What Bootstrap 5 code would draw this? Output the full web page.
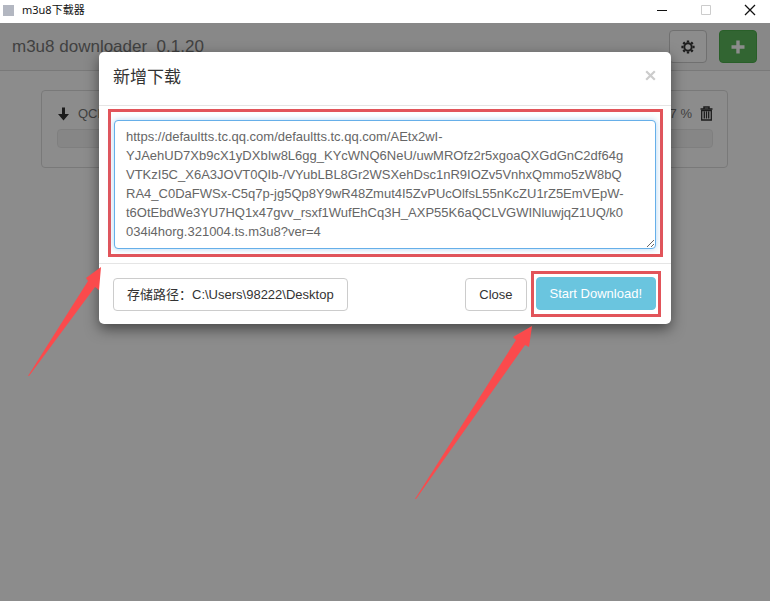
<!DOCTYPE html>
<html lang="zh-CN">
<head>
<meta charset="utf-8">
<meta name="viewport" content="width=device-width, initial-scale=1">
<title>m3u8下载器</title>
<link href="https://cdn.jsdelivr.net/npm/bootstrap@5.3.0/dist/css/bootstrap.min.css" rel="stylesheet">
<style>
  body { font-family: "Liberation Sans", "Noto Sans CJK SC", sans-serif; font-size: 13px; line-height: 19px; color: #333; }
  svg { display: block; }
  .titlebar { height: 23px; font-family: "Noto Sans", "Noto Sans CJK SC", sans-serif; font-size: 11px; line-height: 16px; color: #111; padding: 0 14px 3px 3px; }
  .app-icon { width: 11px; height: 11px; background: #b3b7c1; }
  .win-btn { border: 0; padding: 0; background: none; color: #111; }
  .win-btn:disabled { color: #ccc; }
  .app-header { height: 48px; background: #f8f8f8; border-bottom: 1px solid #dcdcdc; padding: 0 13px 0 12px; }
  .app-name { font-size: 17px; line-height: 24px; color: #777; white-space: pre; }
  .tool-btn { height: 33px; width: 38px; padding: 0; border-radius: 4px; display: flex; align-items: center; justify-content: center; }
  .btn-gear { background: #fff; border: 1px solid #ccc; color: #333; }
  .btn-plus { background: #5cb85c; border: 1px solid #4cae4c; color: #fff; }
  .tasks { padding: 19px 42px 0 41px; }
  .task { border: 1px solid #ddd; border-radius: 4px; padding: 12px 14px 19px 15px; }
  .task-line { height: 21px; color: #777; }
  .task .progress { height: 19px; margin-top: 5px; border-radius: 4px; background: #f5f5f5; border: 1px solid #e8e8e8; }
  .shade { background: rgba(0, 0, 0, .45); }
  .dialog-wrap { max-width: 572px; padding-top: 29px; }
  .dialog-box { border: 0; border-radius: 5px; box-shadow: 0 5px 14px rgba(0, 0, 0, .5); }
  .dialog-box .modal-header { height: 54px; padding: 0 15px 2px 14px; border-bottom: 1px solid #e5e5e5; }
  .dialog-box .modal-title { font-size: 17px; line-height: 24px; }
  .close-x { border: 0; background: none; padding: 0; color: #ccc; }
  .dialog-box .modal-body { padding: 3px 8px 6px 9px; }
  .mark-frame { border: 3px solid #e2545a; }
  .url-frame { padding: 8px 4px 5px 3px; }
  .url-box { height: 129px; padding: 6px 11px; font-size: 13px; line-height: 19px; color: #666; border: 1px solid #66afe9; border-radius: 4px; box-shadow: 0 0 6px rgba(102, 175, 233, .5); overflow: hidden; resize: both; }
  .dialog-box .modal-footer { padding: 7px 10px 7px 14px; border-top: 1px solid #e5e5e5; }
  .dialog-box .modal-footer > * { margin: 0; }
  .act-btn { font-size: 13px; line-height: 19px; padding: 6px 13px; border-radius: 4px; border: 1px solid #ccc; background: #fff; color: #333; }
  .act-start { background: #6ac5df; border-color: #6ac5df; color: #fff; }
  .start-frame { padding: 3px 2px 4px; }
</style>
<script src="https://cdn.jsdelivr.net/npm/bootstrap@5.3.0/dist/js/bootstrap.bundle.min.js"></script>
</head>
<body class="d-flex flex-column min-vh-100 bg-white overflow-hidden position-relative">
  <div class="titlebar d-flex align-items-center">
    <span class="app-icon me-2"></span>
    <span class="me-auto">m3u8下载器</span>
    <div class="d-flex gap-4">
      <button class="win-btn me-2" type="button" aria-label="Minimize"><svg width="12" height="12" viewBox="0 0 12 12" stroke="currentColor"><path d="M1 6.5h10"/></svg></button>
      <button class="win-btn me-1" type="button" aria-label="Maximize" disabled><svg width="12" height="12" viewBox="0 0 12 12" fill="none" stroke="currentColor"><path d="M1.500 1.500h9v9h-9z"/></svg></button>
      <button class="win-btn ms-1" type="button" aria-label="Close window"><svg width="12" height="12" viewBox="0 0 12 12" stroke="currentColor" stroke-width="1.300"><path d="M1 1l10 10M11 1L1 11"/></svg></button>
    </div>
  </div>

  <div class="flex-grow-1 position-relative">
    <header class="app-header d-flex align-items-center">
      <span class="app-name me-auto">m3u8 downloader  0.1.20</span>
      <button class="btn tool-btn btn-gear me-2" type="button" aria-label="Settings">
        <svg width="14" height="14" viewBox="0 0 14 14" fill="none" stroke="currentColor"><circle cx="7" cy="7" r="3.700" stroke-width="2"/><path stroke-width="2.400" d="M7 .4v2M7 11.600v2M.4 7h2M11.600 7h2M2.300 2.300l1.500 1.500M10.200 10.200l1.500 1.500M11.700 2.300l-1.500 1.500M3.800 10.200l-1.500 1.500"/></svg>
      </button>
      <button class="btn tool-btn btn-plus ms-1" type="button" aria-label="Add">
        <svg width="14" height="14" viewBox="0 0 14 14" stroke="currentColor" stroke-width="3.400"><path d="M7 .5v13M.5 7h13"/></svg>
      </button>
    </header>
    <main class="tasks">
      <div class="task">
        <div class="task-line d-flex align-items-center">
          <svg class="me-2" width="13" height="14" viewBox="0 0 13 14" fill="#333"><path d="M5 .5h3V7h4L6.500 13.500 1 7h4z"/></svg>
          <span class="me-auto">QCLVGW</span>
          <span class="me-2">97 %</span>
          <button class="win-btn" type="button" aria-label="Delete">
            <svg width="13" height="15" viewBox="0 0 13 15" fill="none" stroke="#333"><path stroke-width="1.500" d="M.5 3h12M4 2.500V1h5v1.500"/><path stroke-width="1.300" d="M1.700 4.500h9.600v9.500H1.700zM4.300 5.500v7M6.500 5.500v7M8.700 5.500v7"/></svg>
          </button>
        </div>
        <div class="progress" role="progressbar" aria-label="Download progress"></div>
      </div>
    </main>

    <div class="shade position-absolute top-0 start-0 w-100 h-100">
      <div class="dialog-wrap mx-auto">
        <div class="modal-content dialog-box bg-white" role="dialog" aria-labelledby="dialogTitle">
          <div class="modal-header">
            <h4 class="modal-title fw-normal" id="dialogTitle">新增下载</h4>
            <button class="close-x mb-1" type="button" aria-label="Close dialog"><svg width="11" height="11" viewBox="0 0 11 11" stroke="currentColor" stroke-width="2.200"><path d="M1.200 1.200l8.600 8.600M9.800 1.200L1.200 9.800"/></svg></button>
          </div>
          <div class="modal-body">
            <div class="mark-frame url-frame">
              <textarea class="form-control url-box" aria-label="URL" spellcheck="false">https://defaultts.tc.qq.com/defaultts.tc.qq.com/AEtx2wI-
YJAehUD7Xb9cX1yDXbIw8L6gg_KYcWNQ6NeU/uwMROfz2r5xgoaQXGdGnC2df64g
VTKzI5C_X6A3JOVT0QIb-/VYubLBL8Gr2WSXehDsc1nR9IOZv5VnhxQmmo5zW8bQ
RA4_C0DaFWSx-C5q7p-jg5Qp8Y9wR48Zmut4I5ZvPUcOlfsL55nKcZU1rZ5EmVEpW-
t6OtEbdWe3YU7HQ1x47gvv_rsxf1WufEhCq3H_AXP55K6aQCLVGWINluwjqZ1UQ/k0
034i4horg.321004.ts.m3u8?ver=4</textarea>
            </div>
          </div>
          <div class="modal-footer flex-nowrap">
            <button class="btn act-btn me-auto" type="button">存储路径：C:\Users\98222\Desktop</button>
            <button class="btn act-btn" type="button">Close</button>
            <div class="mark-frame start-frame ms-1"><button class="btn act-btn act-start" type="button">Start Download!</button></div>
          </div>
        </div>
      </div>
    </div>
  </div>

  <svg class="position-absolute top-0 start-0 pe-none" width="770" height="601" viewBox="0 0 770 601" fill="#fb4a4c" aria-hidden="true">
    <path d="M28 376L88 281 86 278 101 267 99 290 95 287 29 376z"/>
    <path d="M415 499L516 340 513 337 532 326 529 347 525 345 416 499z"/>
  </svg>
</body>
</html>
